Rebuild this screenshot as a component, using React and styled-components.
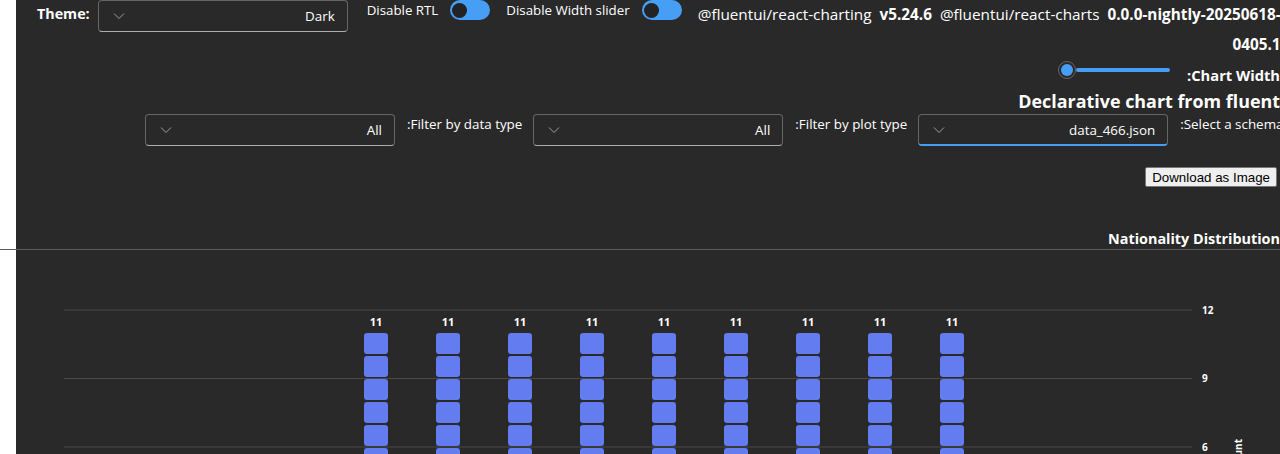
import React from "react";
import styled, { createGlobalStyle } from "styled-components";

const Global = createGlobalStyle`
  html, body { margin: 0; padding: 0; background: #ffffff; }
  body { font-family: "Segoe UI", "Open Sans", sans-serif; }
`;

const Page = styled.div`
  width: 1280px;
  height: 454px;
  padding-left: 16px;
  box-sizing: border-box;
  overflow: hidden;
  background: #ffffff;
`;

const Panel = styled.div`
  background: #292929;
  color: #ffffff;
  height: 454px;
  font-family: "Segoe UI", "Open Sans", sans-serif;
`;

const TopRow = styled.div`
  display: flex;
  align-items: flex-start;
  padding-left: 21px;
  height: 60px;
`;

const BoldLabel = styled.span`
  font-weight: 700;
  font-size: 14.3px;
  line-height: 28px;
  white-space: nowrap;
  margin-right: ${(p) => p.$gap || 0}px;
`;

const Dropdown = styled.div`
  width: 250px;
  height: 32px;
  box-sizing: border-box;
  flex-shrink: 0;
  display: flex;
  align-items: center;
  justify-content: space-between;
  padding: 0 12px 0 14px;
  border: 1px solid #666666;
  border-bottom: ${(p) => (p.$focused ? "2px solid #479ef5" : "1px solid #adadad")};
  border-radius: 4px;
  background: #292929;
  color: #ffffff;
  font-size: 13.4px;
  margin-right: ${(p) => p.$gap || 0}px;
`;

const ToggleGroup = styled.div`
  display: flex;
  align-items: center;
  gap: 12px;
  margin-left: ${(p) => p.$left || 0}px;
  height: 20px;
`;

const ToggleText = styled.span`
  font-size: 13.3px;
  line-height: 20px;
  white-space: nowrap;
`;

const Switch = styled.span`
  width: 40px;
  height: 20px;
  box-sizing: border-box;
  border-radius: 10px;
  background: #479ef5;
  display: flex;
  align-items: center;
  padding-left: 2px;
  flex-shrink: 0;
`;

const Knob = styled.span`
  width: 15px;
  height: 15px;
  border-radius: 50%;
  background: #232323;
`;

const Versions = styled.div`
  flex: 1;
  margin-left: 16px;
  text-align: right;
  font-size: 15.3px;
  line-height: 30px;
  margin-top: -1px;
  white-space: nowrap;
`;

const Strong = styled.b`
  font-weight: 700;
`;

const SliderRow = styled.div`
  display: flex;
  justify-content: flex-end;
  align-items: flex-start;
  height: 29px;
  gap: 17px;
`;

const Slider = styled.div`
  width: 112px;
  height: 20px;
  display: flex;
  align-items: center;
`;

const Thumb = styled.span`
  width: 18px;
  height: 18px;
  box-sizing: border-box;
  border-radius: 50%;
  border: 1px solid #666666;
  background: #292929;
  display: flex;
  align-items: center;
  justify-content: center;
  flex-shrink: 0;
  &::before {
    content: "";
    width: 12px;
    height: 12px;
    border-radius: 50%;
    background: #479ef5;
  }
`;

const Track = styled.span`
  flex: 1;
  height: 4px;
  border-radius: 2px;
  background: #479ef5;
`;

const SliderLabel = styled.span`
  font-weight: 700;
  font-size: 14.7px;
  line-height: 18px;
  padding-top: 6px;
  white-space: nowrap;
`;

const Title = styled.div`
  font-weight: 700;
  font-size: 17.9px;
  line-height: 24px;
  text-align: right;
  white-space: nowrap;
`;

const FilterRow = styled.div`
  display: flex;
  align-items: flex-start;
  padding-left: 129px;
  margin-top: 1px;
  white-space: nowrap;
`;

const FilterLabel = styled.span`
  font-size: 13.4px;
  line-height: 20px;
  margin-right: 11px;
  flex-shrink: 0;
`;

const ButtonRow = styled.div`
  display: flex;
  justify-content: flex-end;
  padding-right: 3px;
  margin-top: 21px;
`;

const DownloadButton = styled.button`
  height: 20px;
  box-sizing: border-box;
  padding: 0 6px;
  font-family: "Liberation Sans", Arial, sans-serif;
  font-size: 13.33px;
  color: #000000;
  background: #efefef;
  border: 1px solid #767676;
  border-radius: 2px;
`;

const ChartTitle = styled.div`
  margin-top: 42px;
  font-weight: 700;
  font-size: 14.4px;
  line-height: 20px;
  text-align: right;
  white-space: nowrap;
`;

const Divider = styled.div`
  height: 1px;
  background: #5c5c5c;
  margin-left: -16px;
`;

const ChartSvg = styled.svg`
  display: block;
  font-family: "Segoe UI", "Open Sans", sans-serif;
`;

const Chevron = () => (
  <svg width="12" height="8" viewBox="0 0 12 8">
    <path d="M1 1.5 L6 6.5 L11 1.5" fill="none" stroke="#9e9e9e" strokeWidth="1" />
  </svg>
);

const Toggle = ({ label, left }) => (
  <ToggleGroup $left={left}>
    <ToggleText>{label}</ToggleText>
    <Switch>
      <Knob />
    </Switch>
  </ToggleGroup>
);

const bars = Array.from({ length: 9 }, (_, i) => 348 + i * 72);
const blocks = Array.from({ length: 11 }, (_, i) => 83 + i * 23);
const grid = [
  { y: 60, label: "12" },
  { y: 128.5, label: "9" },
  { y: 197, label: "6" },
];

const Chart = () => (
  <ChartSvg width="1264" height="204" viewBox="0 0 1264 204">
    {grid.map((g) => (
      <g key={g.label}>
        <line x1="48" x2="1176" y1={g.y} y2={g.y} stroke="#4a4a4a" strokeWidth="1" />
        <text x="1186" y={g.y + 3.5} fill="#ffffff" fontSize="10" fontWeight="700">
          {g.label}
        </text>
      </g>
    ))}
    {bars.map((x) => (
      <g key={x}>
        <text x={x + 12} y="76" fill="#ffffff" fontSize="11" fontWeight="700" textAnchor="middle">
          11
        </text>
        {blocks.map((y) => (
          <rect key={y} x={x} y={y} width="24" height="21" rx="3" fill="#637cef" />
        ))}
      </g>
    ))}
    <text
      x="1226"
      y="204"
      fill="#ffffff"
      fontSize="10"
      fontWeight="700"
      textAnchor="middle"
      transform="rotate(-90 1226 204)"
    >
      Count
    </text>
  </ChartSvg>
);

export default function App() {
  return (
    <>
      <Global />
      <Page>
        <Panel>
          <TopRow>
            <BoldLabel $gap={8}>Theme:</BoldLabel>
            <Dropdown>
              <Chevron />
              <span>Dark</span>
            </Dropdown>
            <Toggle label="Disable RTL" left={19} />
            <Toggle label="Disable Width slider" left={16} />
            <Versions>
              @fluentui/react-charting&nbsp; <Strong>v5.24.6</Strong>&nbsp; @fluentui/react-charts&nbsp;{" "}
              <Strong>0.0.0-nightly-20250618-</Strong>
              <br />
              <Strong>0405.1</Strong>
            </Versions>
          </TopRow>
          <SliderRow>
            <Slider>
              <Thumb />
              <Track />
            </Slider>
            <SliderLabel>:Chart Width</SliderLabel>
          </SliderRow>
          <Title>Declarative chart from fluent</Title>
          <FilterRow>
            <Dropdown $gap={12}>
              <Chevron />
              <span>All</span>
            </Dropdown>
            <FilterLabel>:Filter by data type</FilterLabel>
            <Dropdown $gap={12}>
              <Chevron />
              <span>All</span>
            </Dropdown>
            <FilterLabel>:Filter by plot type</FilterLabel>
            <Dropdown $gap={12} $focused>
              <Chevron />
              <span>data_466.json</span>
            </Dropdown>
            <FilterLabel>:Select a schema</FilterLabel>
          </FilterRow>
          <ButtonRow>
            <DownloadButton>Download as Image</DownloadButton>
          </ButtonRow>
          <ChartTitle>Nationality Distribution</ChartTitle>
          <Divider />
          <Chart />
        </Panel>
      </Page>
    </>
  );
}
